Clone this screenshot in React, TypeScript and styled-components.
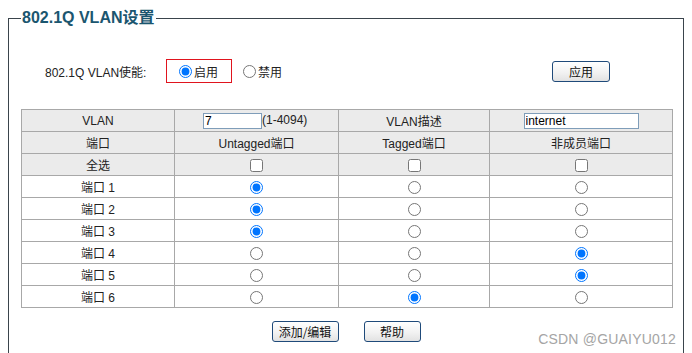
import React from 'react';
import styled, { createGlobalStyle } from 'styled-components';

const GlobalStyle = createGlobalStyle`
  body {
    margin: 8px;
    background: #ffffff;
    font-family: 'Liberation Sans', 'Noto Sans CJK SC', Arial, sans-serif;
    font-size: 12px;
    color: #222;
    overflow: hidden;
  }
`;

const Frame = styled.fieldset`
  margin: 0;
  padding: 0 12px 20px 12px;
  border: 1px solid #3a444c;
  min-width: 0;
  position: relative;
`;

const Legend = styled.legend`
  padding: 0 1px;
  margin-left: 0;
  font-size: 16px;
  font-weight: bold;
  color: #1b566f;
  line-height: 20px;
`;

const EnableRow = styled.div`
  display: flex;
  align-items: center;
  height: 24px;
  margin-top: 31px;
  padding-left: 24px;
`;

const EnableLabel = styled.span`
  width: 121px;
  color: #222;
`;

const Highlight = styled.div`
  display: flex;
  align-items: center;
  height: 24px;
  width: 66px;
  border: 1px solid #e0141e;
  padding-left: 12px;
  box-sizing: border-box;
`;

const RadioLabel = styled.label<{ $offset?: number }>`
  display: inline-flex;
  align-items: center;
  gap: 2px;
  font-size: 12px;
  color: #222;
  margin-left: ${({ $offset }) => $offset ?? 0}px;
`;

const Radio = styled.input`
  margin: 0;
  width: 13px;
  height: 13px;
`;

const Spacer = styled.div`
  flex: 1;
`;

const Button = styled.button<{ $width: number }>`
  width: ${({ $width }) => $width}px;
  height: 21px;
  padding: 0;
  font-family: 'Noto Sans CJK SC', 'Liberation Sans', sans-serif;
  font-size: 12px;
  color: #111;
  border: 1px solid #1f4a7a;
  border-radius: 3px;
  background: linear-gradient(#ffffff, #f2f2f2 55%, #e2e2e2);
  line-height: 19px;
`;

const ApplyButton = styled(Button)`
  margin-right: 61px;
  margin-top: 1px;
`;

const Grid = styled.table`
  margin-top: 26px;
  width: 651px;
  border-collapse: collapse;
  table-layout: fixed;
`;

const Row = styled.tr<{ $head?: boolean }>`
  height: 22px;
  background: ${({ $head }) => ($head ? '#ebebeb' : '#ffffff')};
`;

const Cell = styled.td`
  border: 1px solid #a8a8a8;
  padding: 0;
  text-align: center;
  vertical-align: middle;
  color: #222;
  font-size: 12px;
  height: 20px;
`;

const LeftCell = styled(Cell)`
  text-align: left;
  padding-left: 28px;
`;

const TextInput = styled.input<{ $width: number }>`
  width: ${({ $width }) => $width}px;
  height: 16px;
  box-sizing: border-box;
  border: 1px solid #7f9db9;
  padding: 0 1px;
  font-family: 'Liberation Sans', sans-serif;
  font-size: 12px;
  color: #000;
  margin: 0;
  vertical-align: middle;
  outline: none;
`;

const Check = styled.input`
  margin: 0;
  width: 13px;
  height: 13px;
  vertical-align: middle;
`;

const Footer = styled.div`
  display: flex;
  justify-content: center;
  gap: 25px;
  margin-top: 13px;
`;

const Watermark = styled.div`
  position: absolute;
  right: 7px;
  top: 303px;
  font-family: 'Liberation Sans', sans-serif;
  font-size: 14px;
  color: #a5a5a5;
  letter-spacing: 0.2px;
`;

const ports = [
  { name: '端口 1', mode: 0 },
  { name: '端口 2', mode: 0 },
  { name: '端口 3', mode: 0 },
  { name: '端口 4', mode: 2 },
  { name: '端口 5', mode: 2 },
  { name: '端口 6', mode: 1 },
];

export default function App() {
  return (
    <>
      <GlobalStyle />
      <Frame>
        <Legend>802.1Q VLAN设置</Legend>
        <EnableRow>
          <EnableLabel>802.1Q VLAN使能:</EnableLabel>
          <Highlight>
            <RadioLabel>
              <Radio type="radio" name="enable" defaultChecked />
              启用
            </RadioLabel>
          </Highlight>
          <RadioLabel $offset={11}>
            <Radio type="radio" name="enable" />
            禁用
          </RadioLabel>
          <Spacer />
          <ApplyButton $width={58}>应用</ApplyButton>
        </EnableRow>
        <Grid>
          <colgroup>
            <col style={{ width: 153 }} />
            <col style={{ width: 164 }} />
            <col style={{ width: 151 }} />
            <col style={{ width: 183 }} />
          </colgroup>
          <tbody>
            <Row $head>
              <Cell>VLAN</Cell>
              <LeftCell>
                <TextInput $width={59} defaultValue="7" />
                (1-4094)
              </LeftCell>
              <Cell>VLAN描述</Cell>
              <Cell>
                <TextInput $width={115} defaultValue="internet" />
              </Cell>
            </Row>
            <Row $head>
              <Cell>端口</Cell>
              <Cell>Untagged端口</Cell>
              <Cell>Tagged端口</Cell>
              <Cell>非成员端口</Cell>
            </Row>
            <Row $head>
              <Cell>全选</Cell>
              <Cell>
                <Check type="checkbox" />
              </Cell>
              <Cell>
                <Check type="checkbox" />
              </Cell>
              <Cell>
                <Check type="checkbox" />
              </Cell>
            </Row>
            {ports.map((port, i) => (
              <Row key={port.name}>
                <Cell>{port.name}</Cell>
                {[0, 1, 2].map((m) => (
                  <Cell key={m}>
                    <Check type="radio" name={`port${i}`} defaultChecked={port.mode === m} />
                  </Cell>
                ))}
              </Row>
            ))}
          </tbody>
        </Grid>
        <Footer>
          <Button $width={67}>添加/编辑</Button>
          <Button $width={57}>帮助</Button>
        </Footer>
        <Watermark>CSDN @GUAIYU012</Watermark>
      </Frame>
    </>
  );
}
